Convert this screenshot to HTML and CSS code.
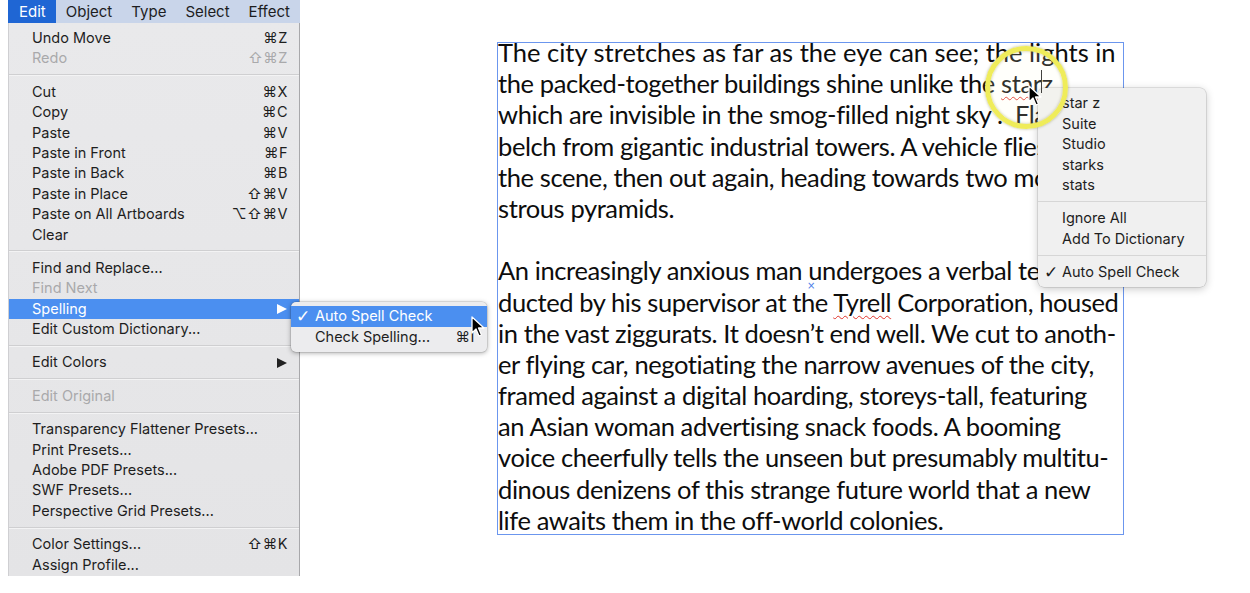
FILE: index.html
```html
<!DOCTYPE html>
<html>
<head>
<meta charset="utf-8">
<link rel="stylesheet" href="styles.css">
</head>
<body>
<div class="app">
  <div class="menucol">
    <div class="menubar">
      <span class="mb active">Edit</span><span class="mb">Object</span><span class="mb">Type</span><span class="mb">Select</span><span class="mb">Effect</span>
    </div>
    <div class="menu">
      <div class="item"><span>Undo Move</span><span class="sc">⌘Z</span></div>
      <div class="item dis"><span>Redo</span><span class="sc">⇧⌘Z</span></div>
      <div class="sep"></div>
      <div class="item"><span>Cut</span><span class="sc">⌘X</span></div>
      <div class="item"><span>Copy</span><span class="sc">⌘C</span></div>
      <div class="item"><span>Paste</span><span class="sc">⌘V</span></div>
      <div class="item"><span>Paste in Front</span><span class="sc">⌘F</span></div>
      <div class="item"><span>Paste in Back</span><span class="sc">⌘B</span></div>
      <div class="item"><span>Paste in Place</span><span class="sc">⇧⌘V</span></div>
      <div class="item"><span>Paste on All Artboards</span><span class="sc">⌥⇧⌘V</span></div>
      <div class="item"><span>Clear</span></div>
      <div class="sep"></div>
      <div class="item"><span>Find and Replace...</span></div>
      <div class="item dis"><span>Find Next</span></div>
      <div class="item hl"><span>Spelling</span><span class="arrow"></span></div>
      <div class="item"><span>Edit Custom Dictionary...</span></div>
      <div class="sep"></div>
      <div class="item"><span>Edit Colors</span><span class="arrow"></span></div>
      <div class="sep"></div>
      <div class="item dis"><span>Edit Original</span></div>
      <div class="sep"></div>
      <div class="item"><span>Transparency Flattener Presets...</span></div>
      <div class="item"><span>Print Presets...</span></div>
      <div class="item"><span>Adobe PDF Presets...</span></div>
      <div class="item"><span>SWF Presets...</span></div>
      <div class="item"><span>Perspective Grid Presets...</span></div>
      <div class="sep"></div>
      <div class="item"><span>Color Settings...</span><span class="sc">⇧⌘K</span></div>
      <div class="item"><span>Assign Profile...</span></div>
    </div>
  </div>
  <div class="canvas">
    <div class="frame">
      <div class="text">
        <div class="ln loose">The city stretches as far as the eye can see; the lights in</div>
        <div class="ln">the packed-together buildings shine unlike the <span class="sq">starz</span></div>
        <div class="ln">which are invisible in the smog-filled night sky .&nbsp; Flames</div>
        <div class="ln">belch from gigantic industrial towers. A vehicle flies into</div>
        <div class="ln">the scene, then out again, heading towards two mon-</div>
        <div class="ln">strous pyramids.</div>
        <div class="ln">&nbsp;</div>
        <div class="ln">An increasingly anxious man undergoes a verbal test con-</div>
        <div class="ln">ducted by his supervisor at the <span class="sq">Tyrell</span> Corporation, housed</div>
        <div class="ln">in the vast ziggurats. It doesn’t end well. We cut to anoth-</div>
        <div class="ln">er flying car, negotiating the narrow avenues of the city,</div>
        <div class="ln">framed against a digital hoarding, storeys-tall, featuring</div>
        <div class="ln">an Asian woman advertising snack foods. A booming</div>
        <div class="ln">voice cheerfully tells the unseen but presumably multitu-</div>
        <div class="ln">dinous denizens of this strange future world that a new</div>
        <div class="ln">life awaits them in the off-world colonies.</div>
      </div>
    </div>
  </div>
</div>

<div class="submenu">
  <div class="sitem hl"><span class="chk">✓</span><span>Auto Spell Check</span></div>
  <div class="sitem"><span class="chk"></span><span>Check Spelling...</span><span class="sc">⌘I</span></div>
</div>

<div class="ctx">
  <div class="citem">star z</div>
  <div class="citem">Suite</div>
  <div class="citem">Studio</div>
  <div class="citem">starks</div>
  <div class="citem">stats</div>
  <div class="csep"></div>
  <div class="citem">Ignore All</div>
  <div class="citem">Add To Dictionary</div>
  <div class="csep"></div>
  <div class="citem"><span class="cchk">✓</span>Auto Spell Check</div>
</div>

<div class="xmark">×</div>
<div class="caret"></div>
<div class="ring"></div>

<svg class="cursor cur1" width="14" height="22" viewBox="0 0 14 22"><path d="M1 1 L1 17 L5 13 L8 20 L10.5 19 L7.5 12 L13 12 Z" fill="#000" stroke="#fff" stroke-width="1.3" stroke-linejoin="round"/></svg>
<svg class="cursor cur2" width="14" height="22" viewBox="0 0 14 22"><path d="M1 1 L1 17 L5 13 L8 20 L10.5 19 L7.5 12 L13 12 Z" fill="#000" stroke="#fff" stroke-width="1.3" stroke-linejoin="round"/></svg>
</body>
</html>
```

FILE: styles.css
```css
html, body {
  margin: 0;
  padding: 0;
  background: #fff;
}
body {
  width: 1250px;
  height: 593px;
  overflow: hidden;
  position: relative;
  font-family: "Inter", "DejaVu Sans", sans-serif;
}
.app {
  display: flex;
  align-items: flex-start;
}
.menucol {
  margin-left: 8px;
  width: 292px;
  flex: none;
}
.menubar {
  height: 23px;
  background: #c9d5ea;
  display: flex;
  align-items: center;
  font-size: 15px;
  color: #1d1d1f;
}
.mb {
  padding: 0 9px 0 10px;
  line-height: 23px;
  height: 23px;
}
.mb.active {
  background: #1f66d4;
  color: #fff;
  padding: 0 10px 0 11px;
}
.menu {
  height: 553px;
  box-sizing: border-box;
  padding-top: 5px;
  background: linear-gradient(#e9e9eb, #e4e4e6);
  border-left: 1px solid #cfcfd2;
  border-right: 1px solid #a8a8ab;
  overflow: hidden;
  font-size: 14.5px;
  color: #1e1e1e;
}
.item {
  height: 20.4px;
  line-height: 20.4px;
  display: flex;
  justify-content: space-between;
  align-items: center;
  padding: 0 11px 0 23px;
}
.item.dis {
  color: #a9a9ab;
}
.item.hl {
  background: #4b8ff0;
  color: #fff;
}
.sc {
  font-family: "Inter", "DejaVu Sans", sans-serif;
  letter-spacing: 0.5px;
}
.sep {
  height: 13px;
  display: flex;
  align-items: center;
}
.sep::before {
  content: "";
  flex: 1;
  height: 1px;
  background: #cfcfd1;
  border-bottom: 1px solid #f3f3f4;
}
.arrow {
  width: 0;
  height: 0;
  border-left: 10px solid #222;
  border-top: 5.5px solid transparent;
  border-bottom: 5.5px solid transparent;
  margin-right: 1px;
}
.item.hl .arrow {
  border-left-color: #fff;
}
.canvas {
  flex: 1;
  padding: 42px 0 0 197px;
}
.frame {
  width: 625px;
  height: 491px;
  border: 1px solid #6b96ee;
}
.text {
  margin-top: -6px;
  font-family: "Lato", "Open Sans", sans-serif;
  font-size: 25.5px;
  letter-spacing: -0.4px;
  line-height: 31.2px;
  color: #0d0d0d;
}
.ln {
  white-space: nowrap;
  height: 31.2px;
}
.ln.loose {
  letter-spacing: 0;
}
.sq {
  text-decoration: underline wavy #e0332b;
  text-decoration-thickness: 1px;
  text-underline-offset: 3px;
}
.submenu {
  position: absolute;
  left: 291px;
  top: 302px;
  width: 196px;
  height: 50px;
  box-sizing: border-box;
  padding-top: 4px;
  background: #ececee;
  border-radius: 5px;
  box-shadow: 0 1px 5px rgba(0,0,0,0.35), 0 0 0 0.5px rgba(0,0,0,0.15);
  font-size: 14.5px;
  color: #1e1e1e;
}
.sitem {
  height: 20.5px;
  line-height: 20.5px;
  display: flex;
  align-items: center;
}
.sitem.hl {
  background: #4b8ff0;
  color: #fff;
}
.chk {
  width: 24px;
  text-align: center;
  font-family: "DejaVu Sans", sans-serif;
  font-size: 17px;
  font-weight: bold;
}
.sitem .sc {
  margin-left: auto;
  margin-right: 12px;
}
.ctx {
  position: absolute;
  left: 1038px;
  top: 88px;
  width: 168px;
  height: 199px;
  box-sizing: border-box;
  padding-top: 5px;
  background: #f0f0f0;
  border-radius: 6px;
  box-shadow: 0 2px 8px rgba(0,0,0,0.22), 0 0 0 0.5px rgba(0,0,0,0.18);
  font-size: 14.5px;
  color: #1e1e1e;
}
.citem {
  height: 20.5px;
  line-height: 20.5px;
  padding-left: 24px;
  position: relative;
}
.cchk {
  position: absolute;
  left: 6px;
  font-family: "DejaVu Sans", sans-serif;
  font-size: 17px;
  font-weight: bold;
}
.csep {
  height: 12.5px;
  display: flex;
  align-items: center;
}
.csep::before {
  content: "";
  flex: 1;
  height: 1px;
  background: #d6d6d6;
}
.xmark {
  position: absolute;
  left: 807px;
  top: 280px;
  font-family: "DejaVu Sans", sans-serif;
  font-size: 10px;
  color: #4a7ee8;
}
.caret {
  position: absolute;
  left: 1041px;
  top: 70px;
  width: 1px;
  height: 23px;
  background: #222;
}
.ring {
  position: absolute;
  left: 985px;
  top: 46px;
  width: 73px;
  height: 73px;
  border: 5.5px solid #efec5a;
  border-radius: 50%;
  box-shadow: 0 0 3px rgba(120,120,40,0.55), inset 0 0 3px rgba(120,120,40,0.45);
  background: rgba(255,255,230,0.15);
}
.cursor {
  position: absolute;
}
.cur1 {
  left: 1028px;
  top: 85px;
}
.cur2 {
  left: 471px;
  top: 316px;
}
```
